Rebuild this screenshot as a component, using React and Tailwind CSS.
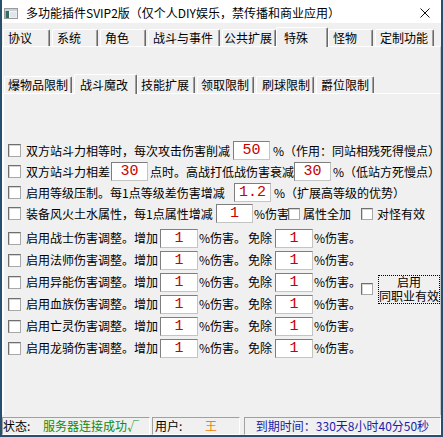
import React from 'react';
import clsx from 'clsx';

const Check = ({ className }) => (
  <span
    className={clsx(
      'block shrink-0 bg-white border border-[#6f6f6f] border-b-[#a8a8a8] border-r-[#a8a8a8] shadow-[inset_1px_1px_0_#d4d4d4]',
      className || 'w-[13px] h-[13px]'
    )}
  />
);

const NumBox = ({ value, className }) => (
  <div
    className={clsx(
      'shrink-0 h-[19px] bg-white border border-[#7e7e7e] border-b-[#c4c4c4] border-r-[#c4c4c4] flex items-center justify-center',
      "text-[#c80000] text-[15px] leading-none font-['Liberation_Mono',monospace]",
      className
    )}
  >
    {value}
  </div>
);

const Tab = ({ label, className, active }) => (
  <div
    className={clsx(
      'shrink-0 flex items-center whitespace-nowrap bg-[#f0f0f0] border-t border-l border-white border-r border-r-[#6a6a6a] rounded-t-[2px] shadow-[inset_-1px_0_0_#a0a0a0]',
      active ? 'relative z-10 h-[20px] -mb-px' : 'h-[17px]',
      className
    )}
  >
    {label}
  </div>
);

const Row = ({ children, className }) => (
  <div className={clsx('flex items-center whitespace-nowrap', className || 'h-[21px]')}>{children}</div>
);

// 职业伤害调整行
const jobs = ['战士', '法师', '异能', '血族', '亡灵', '龙骑'];

export default function App() {
  return (
    <div className="w-[443px] h-[437px] flex flex-col overflow-hidden bg-[#f0f0f0] border-x-2 border-b-2 border-[#27506f] text-[12px] leading-[14px] text-black font-['Noto_Sans_CJK_SC','Liberation_Sans',sans-serif]">
      {/* 标题栏 */}
      <div className="h-[23px] shrink-0 bg-white flex items-center pt-[3px]">
        <svg className="ml-[2px]" width="14" height="11" viewBox="0 0 14 11">
          <rect x="0.5" y="0.5" width="13" height="10" fill="#f4f4f4" stroke="#9a9a9a" />
          <rect x="1" y="1" width="12" height="2" fill="#c8d2da" />
          <rect x="1.5" y="3" width="3.5" height="7" fill="#2f6e62" />
          <rect x="6" y="4" width="6.5" height="5.5" fill="#e2e6ea" />
        </svg>
        <span className="ml-[8px]">多功能插件SVIP2版（仅个人DIY娱乐，禁传播和商业应用）</span>
        <svg className="ml-auto mr-[11px]" width="10" height="10" viewBox="0 0 10 10">
          <path d="M0.5 0.5 L9.5 9.5 M9.5 0.5 L0.5 9.5" stroke="#111" strokeWidth="1" />
        </svg>
      </div>

      {/* 主选项卡 */}
      <div className="h-[23px] shrink-0 flex items-end pl-[1px]">
        <Tab label="协议" className="w-[47px] pl-[4px]" />
        <Tab label="系统" className="w-[46px] ml-[2px] pl-[4px]" />
        <Tab label="角色" className="w-[46px] ml-[2px] pl-[4px]" />
        <Tab label="战斗与事件" className="w-[72px] ml-[2px] pl-[4px]" />
        <Tab label="公共扩展" className="w-[54px] ml-[2px] pl-[1px]" />
        <Tab label="特殊" active className="w-[52px] pl-[7px]" />
        <Tab label="怪物" className="w-[45px] pl-[4px]" />
        <Tab label="定制功能" className="w-[59px] ml-[2px] pl-[4px]" />
      </div>

      <div className="flex-1 flex flex-col border-t border-l border-white border-r border-r-[#c8c8c8]">
        {/* 子选项卡 */}
        <div className="h-[23px] mt-[23px] shrink-0 flex items-end pl-[1px]">
          <Tab label="爆物品限制" className="w-[68px] pl-[3px]" />
          <Tab label="战斗魔改" active className="w-[63px] ml-[2px] pl-[5px]" />
          <Tab label="技能扩展" className="w-[58px] pl-[3px]" />
          <Tab label="领取限制" className="w-[57px] ml-[2px] pl-[3px]" />
          <Tab label="刷球限制" className="w-[58px] ml-[2px] pl-[5px]" />
          <Tab label="爵位限制" className="w-[58px] ml-[2px] pl-[4px]" />
        </div>

        <div className="flex-1 border-t border-l border-white pl-[4px] pt-[46px]">
          <Row>
            <Check />
            <span className="ml-[5px] w-[208px]">双方站斗力相等时，每次攻击伤害削减</span>
            <NumBox value="50" className="w-[37px]" />
            <span className="ml-[3px]">%（作用：同站相残死得慢点）</span>
          </Row>
          <Row>
            <Check />
            <span className="ml-[5px] w-[87px]">双方站斗力相差</span>
            <NumBox value="30" className="w-[37px]" />
            <span className="w-[148px] pl-[2px]">点时。高战打低战伤害衰减</span>
            <NumBox value="30" className="w-[37px]" />
            <span className="ml-[2px]">%（低站方死慢点）</span>
          </Row>
          <Row>
            <Check />
            <span className="ml-[5px] w-[208px]">启用等级压制。每1点等级差伤害增减</span>
            <NumBox value="1.2" className="w-[37px]" />
            <span className="ml-[3px]">%（扩展高等级的优势）</span>
          </Row>
          <Row>
            <Check />
            <span className="ml-[5px] w-[190px]">装备风火土水属性，每1点属性增减</span>
            <NumBox value="1" className="w-[37px]" />
            <span className="w-[35px] pl-[1px]">%伤害</span>
            <Check className="w-[12px] h-[12px]" />
            <span className="ml-[3px] w-[58px]">属性全加</span>
            <Check className="w-[12px] h-[12px]" />
            <span className="ml-[4px]">对怪有效</span>
          </Row>

          <div className="flex items-center mt-[3px]">
            <div className="w-[353px] flex flex-col">
              {jobs.map((job) => (
                <Row key={job} className="h-[22px]">
                  <Check />
                  <span className="ml-[5px] w-[134px]">启用{job}伤害调整。增加</span>
                  <NumBox value="1" className="w-[38px]" />
                  <span className="w-[50px] pl-[1px]">%伤害。</span>
                  <span className="w-[27px]">免除</span>
                  <NumBox value="1" className="w-[38px]" />
                  <span className="pl-[1px]">%伤害。</span>
                </Row>
              ))}
            </div>
            <div className="flex items-center mb-[8px]">
              <Check className="w-[12px] h-[12px]" />
              <button className="ml-[5px] w-[62px] h-[29px] flex items-center justify-center border border-dotted border-black bg-[#f0f0f0] text-[12px] leading-[14px] text-center">
                启用
                <br />
                同职业有效
              </button>
            </div>
          </div>
        </div>
      </div>

      {/* 状态栏 */}
      <div className="h-[20px] shrink-0 flex items-end">
        <div className="w-[148px] h-[18px] flex items-center border border-[#a0a0a0] border-b-white border-r-white">
          <span className="w-[40px]">状态:</span>
          <span className="text-[#0f8a12]">服务器连接成功√</span>
        </div>
        <div className="w-[88px] ml-[2px] h-[18px] flex items-center border border-[#a0a0a0] border-b-white border-r-white pl-[2px]">
          <span className="w-[50px]">用户:</span>
          <span className="text-[#f08000]">王</span>
        </div>
        <div className="w-[197px] ml-[4px] h-[18px] flex items-center justify-center border border-[#a0a0a0] border-b-white border-r-white">
          <span className="text-[#1c1ca8]">到期时间：330天8小时40分50秒</span>
        </div>
      </div>
    </div>
  );
}
